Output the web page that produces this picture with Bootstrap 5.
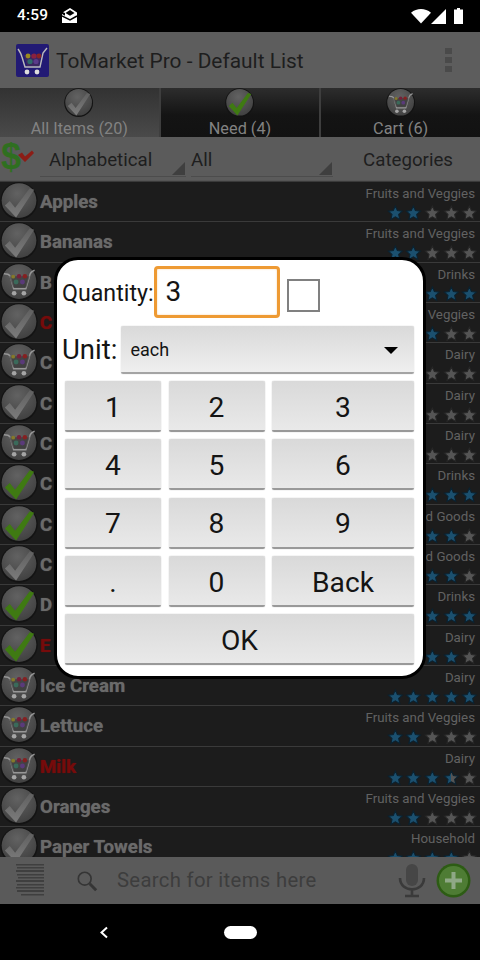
<!DOCTYPE html>
<html lang="en">
<head>
<meta charset="utf-8">
<title>ToMarket Pro</title>
<link href="https://cdn.jsdelivr.net/npm/bootstrap@5.3.0/dist/css/bootstrap.min.css" rel="stylesheet">
<style>
html,body{margin:0;padding:0;width:480px;height:960px;overflow:hidden;background:#000;font-family:Roboto,"Liberation Sans",sans-serif}
.screen{position:relative;width:480px;height:960px;display:flex;flex-direction:column;overflow:hidden}
.statusbar{height:32px;background:#000;color:#fff;padding:0 17px;flex:none}
.statusbar .clock{font-size:15.4px;font-weight:500;letter-spacing:.2px}
.appbar{height:56px;background:#5d5d5d;padding-left:16px;flex:none;color:#1e1e1e}
.appbar .apptitle{font-size:20.9px;margin-left:7px;padding-top:3px}
.kebab{margin-left:auto;margin-right:28px;display:flex;flex-direction:column;gap:2.500px}
.kebab i{display:block;width:7px;height:6.500px;background:#4a4a4a}
.tabbar{height:49px;flex:none;display:flex;background:#121212}
.tabcell{flex:1 1 0;text-align:center;overflow:hidden;background:linear-gradient(#2d2d2d,#141414 55%,#121212);border-left:2px solid #3e3e3e;color:#828282;font-size:16.3px;line-height:17px}
.tabcell:first-child{border-left:0;background:linear-gradient(#323232,#4a4a4a)}
.tabcell svg{display:block;margin:0 auto 2px}
.sortbar{height:44px;flex:none;background:#5b5b5b;color:#1e1e1e;font-size:18.7px;box-shadow:inset 0 -1px 0 #555}
.spinbox{position:relative;height:38px;padding:7px 0 0 9px;border-bottom:1px solid #4c4c4c;margin-top:2px}
.spinbox::after{content:"";position:absolute;right:1px;bottom:1px;border-style:solid;border-width:0 0 13px 13px;border-color:transparent transparent #3f3f3f transparent}
.itemlist{flex:1 1 auto;background:#1c1c1c;overflow:hidden;height:677px;min-height:0;border-top:1px solid #3a3a3a}
.itemrow{height:40.33px;border-bottom:1px solid #3a3a3a;display:flex;align-items:flex-start}
.itemname{font-size:18.7px;font-weight:700;color:#6a6a6a;margin-left:1px;margin-top:9px;line-height:22px;white-space:nowrap;text-shadow:0 0 1px #5a5a5a}
.itemname.late{color:#760b0b;text-shadow:0 0 1px #760b0b}
.itemside{margin-left:auto;text-align:right;padding-right:5px;padding-top:4px;color:#626262;font-size:13.3px;line-height:16px;white-space:nowrap}
.starline{display:flex;justify-content:flex-end;margin-top:2px;margin-right:-4px}
.starline svg{display:block}
.searchbar{height:47px;background:#5a5a5a;flex:none;color:#3d3d3d;padding-left:16px;font-size:20.3px}
.searchtext{margin-left:19px;letter-spacing:.32px}
.navbar-strip{height:56px;background:#000;flex:none}
.navpill{width:33px;height:13px;border-radius:7px;background:#fff}
.veil-dialog{position:absolute;left:54px;top:257px;width:372px;height:422px;background:#fff;border:3px solid #000;border-radius:24px;padding:6px 5px 0;box-sizing:border-box;color:#141414}
.qty-label{font-size:23.2px;line-height:35px;white-space:nowrap;padding-top:10px}
.qty-field{width:126px;height:52px;border:3px solid #ee9a33;border-radius:4px;font-size:28px;line-height:46px;padding-left:9px;margin-left:0;box-shadow:inset 0 0 2px #f7cf9c}
.qty-check{width:33px;height:33px;border:2px solid #808080;margin-left:7px;background:#fff;margin-top:13px}
.unitrow{margin-top:8px;height:48px}
.unit-label{font-size:27.5px;line-height:48px}
.unit-select{position:relative;margin-left:4px;width:293px;height:48px;background:linear-gradient(#d9d9d9,#efefef);border-bottom:2px solid #a4a4a4;border-radius:2px;font-size:18px;line-height:48px;padding-left:9px;box-shadow:0 0 1px #aaa}
.unit-select::after{content:"";position:absolute;right:16px;top:21px;border-style:solid;border-width:7px 7.5px 0;border-color:#000 transparent transparent}
.keypad{display:grid;grid-template-columns:96px 96px 142px;column-gap:7.5px;row-gap:7.25px;margin:7px 0 0 3px;width:349px}
.keycap{height:51px;padding:5px 0 0;border:0;border-bottom:2px solid #999;border-radius:2px;background:linear-gradient(#d9d9d9,#e9e9e9);font-size:28.2px;line-height:1;color:#141414;box-shadow:0 0 1px #999}
.keycap.wide{grid-column:1/4}
</style>
</head>
<body>
<svg width="0" height="0" class="position-absolute">
<defs>
<linearGradient id="halfstar" x1="0" x2="1" y1="0" y2="0"><stop offset=".5" stop-color="#1b506f"/><stop offset=".5" stop-color="#555"/></linearGradient>
<radialGradient id="discg" cx=".45" cy=".3" r=".85"><stop offset="0" stop-color="#626262"/><stop offset="1" stop-color="#3a3a3a"/></radialGradient>
<linearGradient id="chkg" x1="0" x2="0" y1="0" y2="1"><stop offset="0" stop-color="#606060"/><stop offset="1" stop-color="#7c7c7c"/></linearGradient>
<symbol id="icdisc" viewBox="0 0 40 40"><circle cx="19.500" cy="19.500" r="19.200" fill="#131313"/><circle cx="19.500" cy="19" r="17.800" fill="url(#discg)"/></symbol>
<symbol id="iccheck" viewBox="0 0 40 40"><use href="#icdisc"/><path d="M5 24l5-4.500 5.500 7L30.500 6.500 35 8 16.500 36.500z" fill="url(#chkg)"/></symbol>
<symbol id="icgreen" viewBox="0 0 40 40"><use href="#icdisc"/><path d="M5 24l5-4.500 5.500 7L30.500 6.500 35 8 16.500 36.500z" fill="#3f7a12"/></symbol>
<symbol id="iccart" viewBox="0 0 40 40"><use href="#icdisc"/><path d="M4 11l4 .5c2 .5 2.500 2 3 4l3 11h12.500l4-14c.5-2 2-4 5-5" fill="none" stroke="#979797" stroke-width="1.500"/><path d="M9.500 13.500L13.500 25h13.500l3.500-11.500" fill="#363636" opacity=".6"/><circle cx="13.500" cy="14" r="2" fill="#857a2a"/><circle cx="19.500" cy="13.500" r="2.300" fill="#74203a"/><circle cx="25.500" cy="13.500" r="2.300" fill="#852020"/><circle cx="16.500" cy="19.500" r="2.500" fill="#3a6a5a"/><circle cx="23" cy="19.500" r="2.500" fill="#5a3a7a"/><circle cx="14.500" cy="31" r="2.400" fill="#a5a5a5"/><circle cx="24.500" cy="31" r="2.400" fill="#a5a5a5"/></symbol>
</defs>
</svg>
<div class="screen">
 <div class="statusbar d-flex align-items-center">
  <span class="clock">4:59</span>
  <svg style="margin-left:14px" width="16" height="16" viewBox="0 0 16 16" fill="#fff"><path d="M8 0l7 4.500V15H0V6l3 1.800V5L1 4.200z"/><path d="M3.500 5L8 2l4.500 3L8 7.800z" fill="#000"/><path d="M0 8l8 4 7-4" stroke="#000" stroke-width="1.500" fill="none"/></svg>
  <svg class="ms-auto" width="20" height="15" viewBox="0 0 20 15" fill="#fff"><path d="M0 3.800C5.800-1.200 14.200-1.200 20 3.800L10 14.500z"/></svg>
  <svg width="15" height="15" viewBox="0 0 15 15" fill="#fff"><path d="M15 0v15H0z"/></svg>
  <svg style="margin-left:8px" width="9" height="16" viewBox="0 0 9 16" fill="#fff"><path d="M3 0h3v1.500h3V16H0V1.500h3z"/></svg>
 </div>
 <div class="appbar d-flex align-items-center">
  <svg width="33" height="33" viewBox="0 0 33 33"><rect width="33" height="33" rx="2" fill="#221a74"/><path d="M2 5c2 3 3 4 4 8l3 10h15l3-14 4-5" fill="none" stroke="#bbb" stroke-width="1.400"/><path d="M8 11l17-1-2 12H11z" fill="#3c2760"/><circle cx="12" cy="12" r="2.400" fill="#9b8a1f"/><circle cx="18" cy="12" r="2.600" fill="#8a2040"/><circle cx="23" cy="12" r="2.400" fill="#8a2222"/><circle cx="14" cy="17.500" r="2.600" fill="#2f6a6a"/><circle cx="20" cy="17.500" r="2.600" fill="#5a3a8a"/><circle cx="11" cy="28" r="2.400" fill="#ddd"/><circle cx="21" cy="28" r="2.400" fill="#ddd"/></svg>
  <span class="apptitle">ToMarket Pro - Default List</span>
  <div class="kebab"><i></i><i></i><i></i></div>
 </div>
 <div class="tabbar">
  <div class="tabcell"><svg width="30" height="30" viewBox="0 0 40 40"><use href="#iccheck"/></svg><span>All Items (20)</span></div>
  <div class="tabcell"><svg width="30" height="30" viewBox="0 0 40 40"><use href="#icgreen"/></svg><span>Need (4)</span></div>
  <div class="tabcell"><svg width="30" height="30" viewBox="0 0 40 40"><use href="#iccart"/></svg><span>Cart (6)</span></div>
 </div>
 <div class="sortbar d-flex align-items-start">
  <svg class="flex-shrink-0" width="36" height="42" viewBox="0 0 36 42"><text x="1" y="32" font-family="Liberation Sans" font-weight="700" font-size="36" fill="#2f6f20">$</text><path d="M18 18l4-2.500 3 4 7-6 2 2.500-9 9z" fill="#8c1d16"/></svg>
  <div class="spinbox" style="width:146px;margin-left:4px">Alphabetical</div>
  <div class="spinbox" style="width:142px;margin-left:5px;padding-left:0">All</div>
  <div class="ms-auto" style="padding:9px 27px 0 0">Categories</div>
 </div>
 <div class="itemlist" id="list"></div>
 <div class="searchbar d-flex align-items-center">
  <svg width="30" height="36" viewBox="0 0 30 36" fill="#3f3f3f"><rect x="0" y="1" width="28" height="1.500"/><rect x="1" y="4" width="27" height="1.500"/><rect x="0" y="7" width="28" height="2"/><rect x="1" y="11" width="27" height="1.500"/><rect x="2" y="14" width="26" height="1.500"/><rect x="0" y="17" width="28" height="2"/><rect x="1" y="21" width="27" height="1.500"/><rect x="0" y="24" width="28" height="1.500"/><rect x="1" y="27" width="27" height="2"/><rect x="5" y="31" width="23" height="1.500"/></svg>
  <svg style="margin-left:30px" width="22" height="24" viewBox="0 0 24 24" fill="none" stroke="#353535"><circle cx="9.500" cy="9.500" r="7" stroke-width="1.800"/><path d="M15 15l7 7" stroke-width="3.200"/></svg>
  <span class="searchtext">Search for items here</span>
  <svg class="ms-auto" width="28" height="34" viewBox="0 0 28 34"><rect x="8" y="0" width="12" height="22" rx="6" fill="#464646"/><path d="M2 14c0 15 24 15 24 0M14 26v5M7 32h14" fill="none" stroke="#3a3a3a" stroke-width="2.600"/></svg>
  <svg style="margin:0 9px 0 10px" width="35" height="35" viewBox="0 0 35 35"><circle cx="17.500" cy="17.500" r="17" fill="#2d5c14"/><circle cx="17.500" cy="17.500" r="14.500" fill="#4e7c34"/><path d="M17.500 9v17M9 17.500h17" stroke="#8fa886" stroke-width="4"/></svg>
 </div>
 <div class="navbar-strip d-flex align-items-center">
  <svg style="margin-left:99px" width="10" height="13" viewBox="0 0 10 13" fill="none" stroke="#fff" stroke-width="2"><path d="M8 1.500L2.500 6.500 8 11.500"/></svg>
  <div class="navpill" style="margin-left:115px"></div>
 </div>
 <div class="veil-dialog">
  <div class="d-flex align-items-start">
   <span class="qty-label">Quantity:</span>
   <div class="qty-field">3</div>
   <div class="qty-check"></div>
  </div>
  <div class="d-flex unitrow">
   <span class="unit-label">Unit:</span>
   <div class="unit-select">each</div>
  </div>
  <div class="keypad">
   <button class="keycap" type="button">1</button><button class="keycap" type="button">2</button><button class="keycap" type="button">3</button>
   <button class="keycap" type="button">4</button><button class="keycap" type="button">5</button><button class="keycap" type="button">6</button>
   <button class="keycap" type="button">7</button><button class="keycap" type="button">8</button><button class="keycap" type="button">9</button>
   <button class="keycap" type="button">.</button><button class="keycap" type="button">0</button><button class="keycap" type="button">Back</button>
   <button class="keycap wide" type="button">OK</button>
  </div>
 </div>
</div>
<script>
const rows=[["Apples","Fruits and Veggies",2,"c"],["Bananas","Fruits and Veggies",2,"c"],["B","Drinks",5,"k"],["C","Fruits and Veggies",3,"c",1],["C","Dairy",2,"k"],["C","Dairy",2,"c"],["C","Dairy",2,"k"],["C","Drinks",5,"g"],["C","Canned Goods",4,"g"],["C","Canned Goods",4,"c"],["D","Drinks",5,"g"],["E","Dairy",4,"g",1],["Ice Cream","Dairy",5,"k"],["Lettuce","Fruits and Veggies",2,"k"],["Milk","Dairy",3.5,"k",1],["Oranges","Fruits and Veggies",2,"c"],["Paper Towels","Household",4,"c"]];
const ic={c:"iccheck",g:"icgreen",k:"iccart"};
let h="";
for(const r of rows){
 let s="";
 for(let i=0;i<5;i++){const v=r[2]-i;const fill=v>=1?'#1b506f':v>0?'url(#halfstar)':'#555';s+=`<svg width="18.670" height="18" viewBox="-1 -1 20 20"><path d="M9 1.200l2.300 5.100 5.500.6-4.100 3.700 1.200 5.500L9 13.300l-4.900 2.800 1.200-5.500L1.200 6.900l5.500-.6z" fill="${fill}" stroke="${v>0?'#0b2230':'#262626'}" stroke-width="1.200"/></svg>`;}
 h+=`<div class="itemrow"><svg width="39" height="39" viewBox="0 0 40 40" class="flex-shrink-0"><use href="#${ic[r[3]]}"/></svg><span class="itemname${r[4]?' late':''}">${r[0]}</span><div class="itemside"><div>${r[1]}</div><div class="starline">${s}</div></div></div>`;
}
document.getElementById("list").innerHTML=h;
</script>
<script src="https://cdn.jsdelivr.net/npm/bootstrap@5.3.0/dist/js/bootstrap.bundle.min.js"></script>
</body>
</html>
